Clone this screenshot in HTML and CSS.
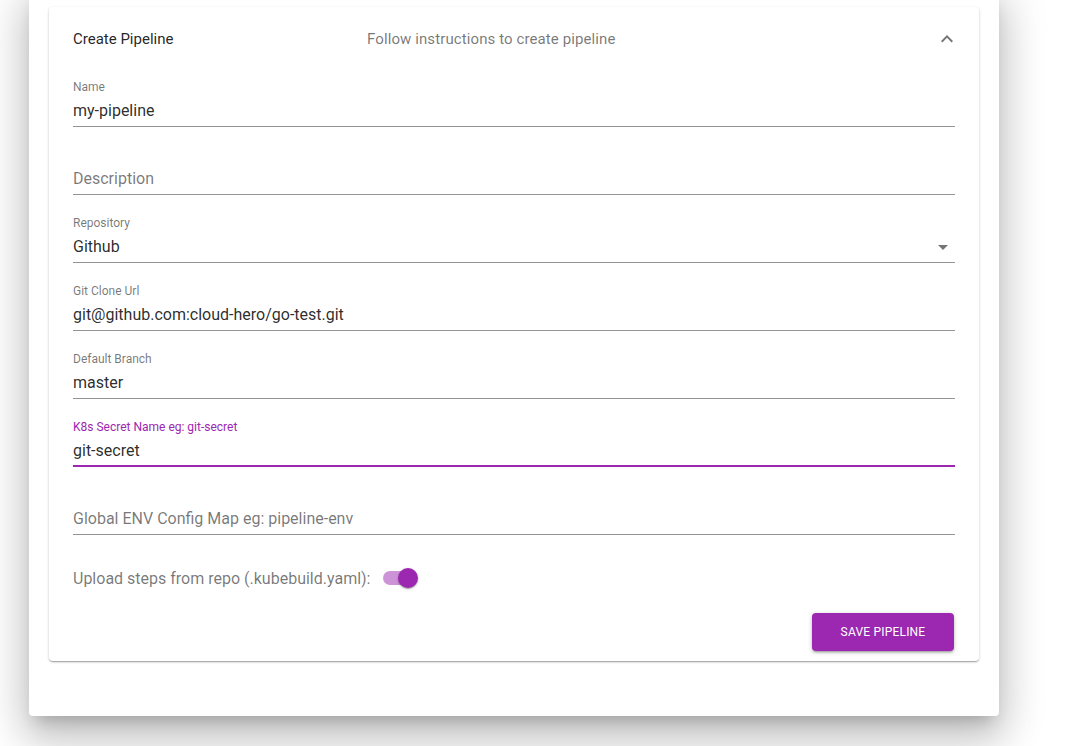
FILE: index.html
```html
<!DOCTYPE html>
<html>
<head>
<meta charset="utf-8">
<link rel="stylesheet" href="styles.css">
</head>
<body>
<div class="page-card">
  <section class="panel">
    <header class="panel-summary">
      <div class="heading">Create Pipeline</div>
      <div class="secondary">Follow instructions to create pipeline</div>
      <span class="expand-icon">
        <svg viewBox="0 0 24 24" width="24" height="24"><path d="M12 8l-6 6 1.41 1.41L12 10.83l4.59 4.58L18 14z"/></svg>
      </span>
    </header>
    <div class="panel-details">
      <div class="field">
        <label class="field-label">Name</label>
        <div class="field-input"><span class="value">my-pipeline</span></div>
      </div>
      <div class="field">
        <label class="field-label"></label>
        <div class="field-input"><span class="placeholder">Description</span></div>
      </div>
      <div class="field">
        <label class="field-label">Repository</label>
        <div class="field-input select"><span class="value">Github</span>
          <svg class="dropdown" viewBox="0 0 24 24" width="24" height="24"><path d="M7 10l5 5 5-5z"/></svg>
        </div>
      </div>
      <div class="field">
        <label class="field-label">Git Clone Url</label>
        <div class="field-input"><span class="value">git@github.com:cloud-hero/go-test.git</span></div>
      </div>
      <div class="field">
        <label class="field-label">Default Branch</label>
        <div class="field-input"><span class="value">master</span></div>
      </div>
      <div class="field focused">
        <label class="field-label">K8s Secret Name eg: git-secret</label>
        <div class="field-input"><span class="value">git-secret</span></div>
      </div>
      <div class="field">
        <label class="field-label"></label>
        <div class="field-input"><span class="placeholder">Global ENV Config Map eg: pipeline-env</span></div>
      </div>
      <div class="switch-row">
        <span class="switch-label">Upload steps from repo (.kubebuild.yaml):</span>
        <span class="switch">
          <span class="track"></span>
          <span class="thumb"></span>
        </span>
      </div>
      <div class="actions">
        <button class="save-btn">SAVE PIPELINE</button>
      </div>
    </div>
  </section>
</div>
</body>
</html>
```

FILE: styles.css
```css
* { box-sizing: border-box; }
html {
  overflow: hidden;
  background: #fff;
}
body {
  margin: 0;
  padding: 0;
  height: 100vh;
  display: flow-root;
  overflow: hidden;
  background: #fff;
  font-family: Roboto, "Liberation Sans", Arial, sans-serif;
}
.page-card {
  width: 970px;
  margin: -13px 0 0 29px;
  padding: 20px 20px 55px 20px;
  background: #fff;
  border-radius: 4px;
  box-shadow: 0px 11px 15px -7px rgba(0,0,0,0.2), 0px 24px 38px 3px rgba(0,0,0,0.14), 0px 9px 46px 8px rgba(0,0,0,0.12);
}
.panel {
  background: #fff;
  border-radius: 4px;
  box-shadow: 0px 1px 3px 0px rgba(0,0,0,0.2), 0px 1px 1px 0px rgba(0,0,0,0.14), 0px 2px 1px -1px rgba(0,0,0,0.12);
}
.panel-summary {
  height: 64px;
  padding: 0 24px;
  display: flex;
  align-items: center;
}
.heading {
  flex: 0 0 294px;
  font-size: 15px;
  color: rgba(0,0,0,0.87);
}
.secondary {
  flex: 1;
  font-size: 15px;
  letter-spacing: 0.1px;
  color: rgba(0,0,0,0.54);
}
.expand-icon {
  width: 24px;
  height: 24px;
  margin-right: -4px;
  display: flex;
}
.expand-icon svg { fill: rgba(0,0,0,0.54); }
.panel-details {
  padding: 9px 24px 10px 24px;
  display: flex;
  flex-direction: column;
  gap: 21px;
}
.field {
  display: flex;
  flex-direction: column;
  border-bottom: 1px solid rgba(0,0,0,0.42);
}
.field-label {
  display: block;
  height: 14px;
  line-height: 14px;
  font-size: 12px;
  color: rgba(0,0,0,0.54);
}
.field-input {
  padding: 7px 0 6px 0;
  height: 32px;
  line-height: 19px;
  font-size: 16px;
  display: flex;
  align-items: center;
}
.value { color: rgba(0,0,0,0.84); }
.placeholder { color: rgba(0,0,0,0.54); }
.select { justify-content: space-between; }
.dropdown { fill: rgba(0,0,0,0.54); margin-right: 0; }
.field.focused { border-bottom: 2px solid #9c27b0; }
.field.focused .field-label { color: #9c27b0; }
.field.focused .field-input { padding-bottom: 5px; height: 31px; }
.switch-row {
  margin-top: -2px;
  height: 48px;
  display: flex;
  align-items: center;
}
.switch-label {
  font-size: 16px;
  color: rgba(0,0,0,0.54);
}
.switch {
  position: relative;
  width: 35px;
  height: 20px;
  margin-left: 12px;
  display: inline-block;
}
.track {
  position: absolute;
  left: 0;
  top: 3px;
  width: 34px;
  height: 14px;
  border-radius: 7px;
  background: #9c27b0;
  opacity: 0.5;
}
.thumb {
  position: absolute;
  left: 15px;
  top: 0;
  width: 20px;
  height: 20px;
  border-radius: 50%;
  background: #9c27b0;
  box-shadow: 0px 1px 3px 0px rgba(0,0,0,0.2), 0px 1px 1px 0px rgba(0,0,0,0.14), 0px 2px 1px -1px rgba(0,0,0,0.12);
}
.actions {
  margin-top: -10px;
  display: flex;
  justify-content: flex-end;
}
.save-btn {
  width: 142px;
  height: 38px;
  margin-right: 1px;
  border: none;
  border-radius: 4px;
  background: #9c27b0;
  color: #fff;
  font-family: Roboto, "Liberation Sans", Arial, sans-serif;
  font-size: 12px;
  font-weight: 400;
  letter-spacing: 0.2px;
  box-shadow: 0px 1px 5px 0px rgba(0,0,0,0.2), 0px 2px 2px 0px rgba(0,0,0,0.14), 0px 3px 1px -2px rgba(0,0,0,0.12);
}
```
